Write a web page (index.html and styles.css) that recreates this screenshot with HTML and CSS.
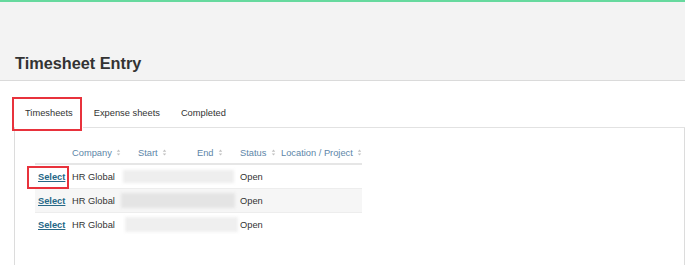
FILE: index.html
```html
<!DOCTYPE html>
<html>
<head>
<meta charset="utf-8">
<link rel="stylesheet" href="styles.css">
</head>
<body>
<div class="topbar"></div>
<header class="page-header">
  <h1 class="title">Timesheet Entry</h1>
</header>
<main class="content">
  <nav class="tabs">
    <a class="tab active highlighted">Timesheets</a>
    <a class="tab">Expense sheets</a>
    <a class="tab">Completed</a>
  </nav>
  <section class="panel">
    <table class="grid">
      <colgroup>
        <col class="c-sel"><col class="c-comp"><col class="c-start"><col class="c-end"><col class="c-status"><col class="c-loc">
      </colgroup>
      <thead>
        <tr>
          <th></th>
          <th>Company <svg class="sort" viewBox="0 0 5 8"><path d="M2.5 0.5 L4.5 3 H0.5 Z M2.5 7.5 L4.5 5 H0.5 Z"/></svg></th>
          <th>Start <svg class="sort" viewBox="0 0 5 8"><path d="M2.5 0.5 L4.5 3 H0.5 Z M2.5 7.5 L4.5 5 H0.5 Z"/></svg></th>
          <th>End <svg class="sort" viewBox="0 0 5 8"><path d="M2.5 0.5 L4.5 3 H0.5 Z M2.5 7.5 L4.5 5 H0.5 Z"/></svg></th>
          <th>Status <svg class="sort" viewBox="0 0 5 8"><path d="M2.5 0.5 L4.5 3 H0.5 Z M2.5 7.5 L4.5 5 H0.5 Z"/></svg></th>
          <th>Location / Project <svg class="sort" viewBox="0 0 5 8"><path d="M2.5 0.5 L4.5 3 H0.5 Z M2.5 7.5 L4.5 5 H0.5 Z"/></svg></th>
        </tr>
      </thead>
      <tbody>
        <tr>
          <td><a class="select highlighted">Select</a></td>
          <td>HR Global</td>
          <td colspan="2"><div class="redacted r1"></div></td>
          <td>Open</td>
          <td></td>
        </tr>
        <tr class="stripe">
          <td><a class="select">Select</a></td>
          <td>HR Global</td>
          <td colspan="2"><div class="redacted r2"></div></td>
          <td>Open</td>
          <td></td>
        </tr>
        <tr>
          <td><a class="select">Select</a></td>
          <td>HR Global</td>
          <td colspan="2"><div class="redacted r3"></div></td>
          <td>Open</td>
          <td></td>
        </tr>
      </tbody>
    </table>
  </section>
</main>
</body>
</html>
```
FILE: styles.css
```css
html, body {
  margin: 0;
  padding: 0;
  background: #fff;
  overflow: hidden;
}
body {
  font-family: "Liberation Sans", Arial, sans-serif;
  font-size: 9.3px;
  color: #333;
}
.topbar {
  height: 2px;
  background: #66d99e;
}
.page-header {
  background: #f3f3f3;
  height: 79px;
  box-sizing: border-box;
  padding: 51px 0 0 15px;
  border-bottom: 1px solid #dadada;
}
.title {
  margin: 0;
  font-size: 16.3px;
  line-height: 20px;
  font-weight: bold;
  color: #333;
}
.content {
  padding-top: 17px;
  margin-left: 14px;
}
.tabs {
  display: flex;
  padding-left: 1px;
  border-bottom: 1px solid #e2e2e2;
  width: 671px;
  box-sizing: border-box;
}
.tab {
  position: relative;
  display: block;
  padding: 1px 10.5px 0;
  height: 28px;
  line-height: 29px;
  color: #333;
}
.tab:first-child {
  padding-left: 10px;
}
.tab.active {
  background: #fff;
  margin-bottom: -1px;
  height: 29px;
}
.tab.highlighted::after {
  content: "";
  position: absolute;
  top: -1px;
  left: -3px;
  right: 1px;
  bottom: -3px;
  border: 2px solid #e8323c;
}
.panel {
  border-left: 1px solid #dcdcdc;
  border-right: 1px solid #dcdcdc;
  width: 671px;
  height: 137px;
  padding: 14px 0 0 20px;
  box-sizing: border-box;
}
.grid {
  border-collapse: collapse;
  table-layout: fixed;
  width: 327px;
}
.c-sel { width: 34px; }
.c-comp { width: 66px; }
.c-start { width: 59px; }
.c-end { width: 43px; }
.c-status { width: 41px; }
.c-loc { width: 84px; }
.grid th {
  text-align: left;
  font-weight: normal;
  color: #5d86a8;
  height: 21px;
  padding: 0 0 0 3px;
  border-bottom: 2px solid #e6e6e6;
  white-space: nowrap;
}
.sort {
  width: 5px;
  height: 7px;
  margin-left: 2px;
  vertical-align: -0.5px;
  fill: #c2c2c2;
}
.grid td {
  height: 23px;
  padding: 0 0 0 3px;
  border-top: 1px solid #ededed;
  white-space: nowrap;
}
.grid tbody tr:first-child td {
  border-top: none;
}
.grid tr.stripe td {
  background: #f6f6f6;
}
.select {
  position: relative;
  font-weight: bold;
  color: #266887;
  text-decoration: underline;
}
.select.highlighted::after {
  content: "";
  position: absolute;
  left: -11px;
  right: -4px;
  top: -6px;
  bottom: -7px;
  border: 2px solid #e8323c;
}
.redacted {
  height: 13px;
  background: #ececec;
  filter: blur(1.5px);
}
.r1 { margin-left: -15px; width: 111px; background: #eeeeee; }
.r2 { margin-left: -17px; width: 114px; height: 15px; background: #e4e4e4; }
.r3 { margin-left: -13px; width: 113px; height: 15px; background: #efefef; }
```
